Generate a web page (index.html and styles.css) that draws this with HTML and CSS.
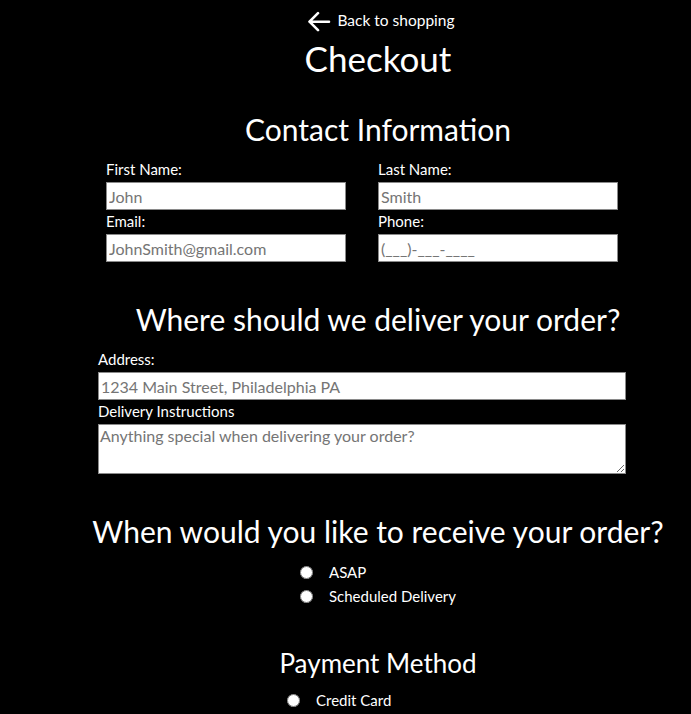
FILE: index.html
```html
<!DOCTYPE html>
<html>
<head>
<meta charset="utf-8">
<link rel="stylesheet" href="styles.css">
</head>
<body>
<div class="page">
  <a class="back" href="#">
    <svg class="arrow" width="24" height="24" viewBox="0 0 24 24"><path d="M22 13.7H3.5M11 5.2L2.5 13.7L11 22.2" fill="none" stroke="#fff" stroke-width="2.6" stroke-linecap="round" stroke-linejoin="round"/></svg>
    <span>Back to shopping</span>
  </a>
  <h1 class="title">Checkout</h1>

  <h2 class="section-title contact-title">Contact Information</h2>
  <div class="contact-grid">
    <div class="field">
      <label class="label">First Name:</label>
      <input class="input" placeholder="John">
    </div>
    <div class="field">
      <label class="label">Last Name:</label>
      <input class="input" placeholder="Smith">
    </div>
    <div class="field">
      <label class="label">Email:</label>
      <input class="input" placeholder="JohnSmith@gmail.com">
    </div>
    <div class="field">
      <label class="label">Phone:</label>
      <input class="input" placeholder="(___)-___-____">
    </div>
  </div>

  <h2 class="section-title deliver-title">Where should we deliver your order?</h2>
  <div class="address">
    <label class="label">Address:</label>
    <input class="input wide" placeholder="1234 Main Street, Philadelphia PA">
    <label class="label">Delivery Instructions</label>
    <textarea class="textarea" placeholder="Anything special when delivering your order?"></textarea>
  </div>

  <h2 class="section-title when-title">When would you like to receive your order?</h2>
  <div class="radios">
    <label class="radio-row"><input type="radio" name="when"><span>ASAP</span></label>
    <label class="radio-row"><input type="radio" name="when"><span>Scheduled Delivery</span></label>
  </div>

  <h2 class="section-title pay-title">Payment Method</h2>
  <div class="radios pay">
    <label class="radio-row"><input type="radio" name="pay"><span>Credit Card</span></label>
  </div>
</div>
</body>
</html>
```
FILE: styles.css
```css
html, body {
  margin: 0;
  padding: 0;
  background: #000;
  color: #fff;
  font-family: Lato, "Noto Sans", sans-serif;
}
.page {
  margin-left: 65px;
  width: 626px;
  padding-top: 8px;
}
.back {
  display: flex;
  justify-content: center;
  align-items: flex-start;
  gap: 6px;
  padding-left: 6px;
  color: #fff;
  text-decoration: none;
  font-size: 15.5px;
  line-height: 24px;
  height: 24px;
}
.arrow { display: block; }
.title {
  margin: 4px 0 0;
  text-align: center;
  font-weight: 400;
  font-size: 35px;
  line-height: 44px;
}
.section-title {
  margin: 0;
  text-align: center;
  font-weight: 400;
  font-size: 30px;
  line-height: 40px;
}
.contact-title { margin-top: 29px; }
.contact-grid {
  margin-left: 41px;
  display: grid;
  grid-template-columns: 240px 240px;
  column-gap: 32px;
  row-gap: 1px;
  margin-top: 10px;
}
.field { display: flex; flex-direction: column; }
.label {
  display: block;
  font-size: 15px;
  line-height: 20px;
  margin-bottom: 3px;
}
.input {
  box-sizing: border-box;
  width: 240px;
  height: 28px;
  margin: 0;
  padding: 1px 2px;
  border: 1px solid #8a8a8a;
  background: #fff;
  font-family: inherit;
  font-size: 16px;
  color: #000;
}
.input::placeholder, .textarea::placeholder { color: #757575; }
.deliver-title { margin-top: 37px; }
.address {
  margin-left: 33px;
  width: 528px;
  margin-top: 10px;
}
.input.wide { width: 528px; display: block; margin-bottom: 1px; }
.textarea {
  display: block;
  box-sizing: border-box;
  width: 528px;
  height: 50px;
  margin: 0;
  padding: 1px 1px;
  border: 1px solid #8a8a8a;
  background: #fff;
  font-family: inherit;
  font-size: 16px;
  line-height: 20px;
}
.when-title { margin-top: 37px; }
.radios {
  width: fit-content;
  margin: 9px auto 0;
  display: flex;
  flex-direction: column;
}
.radios.pay {
  width: 182px;
  margin-top: 7px;
}
.radio-row {
  display: flex;
  align-items: center;
  font-size: 15px;
  line-height: 24px;
  height: 24px;
}
.radio-row input {
  margin: 0 16px 0 0;
  width: 13px;
  height: 13px;
}
.pay-title {
  margin-top: 37px;
  font-size: 26px;
  line-height: 36px;
}
```
